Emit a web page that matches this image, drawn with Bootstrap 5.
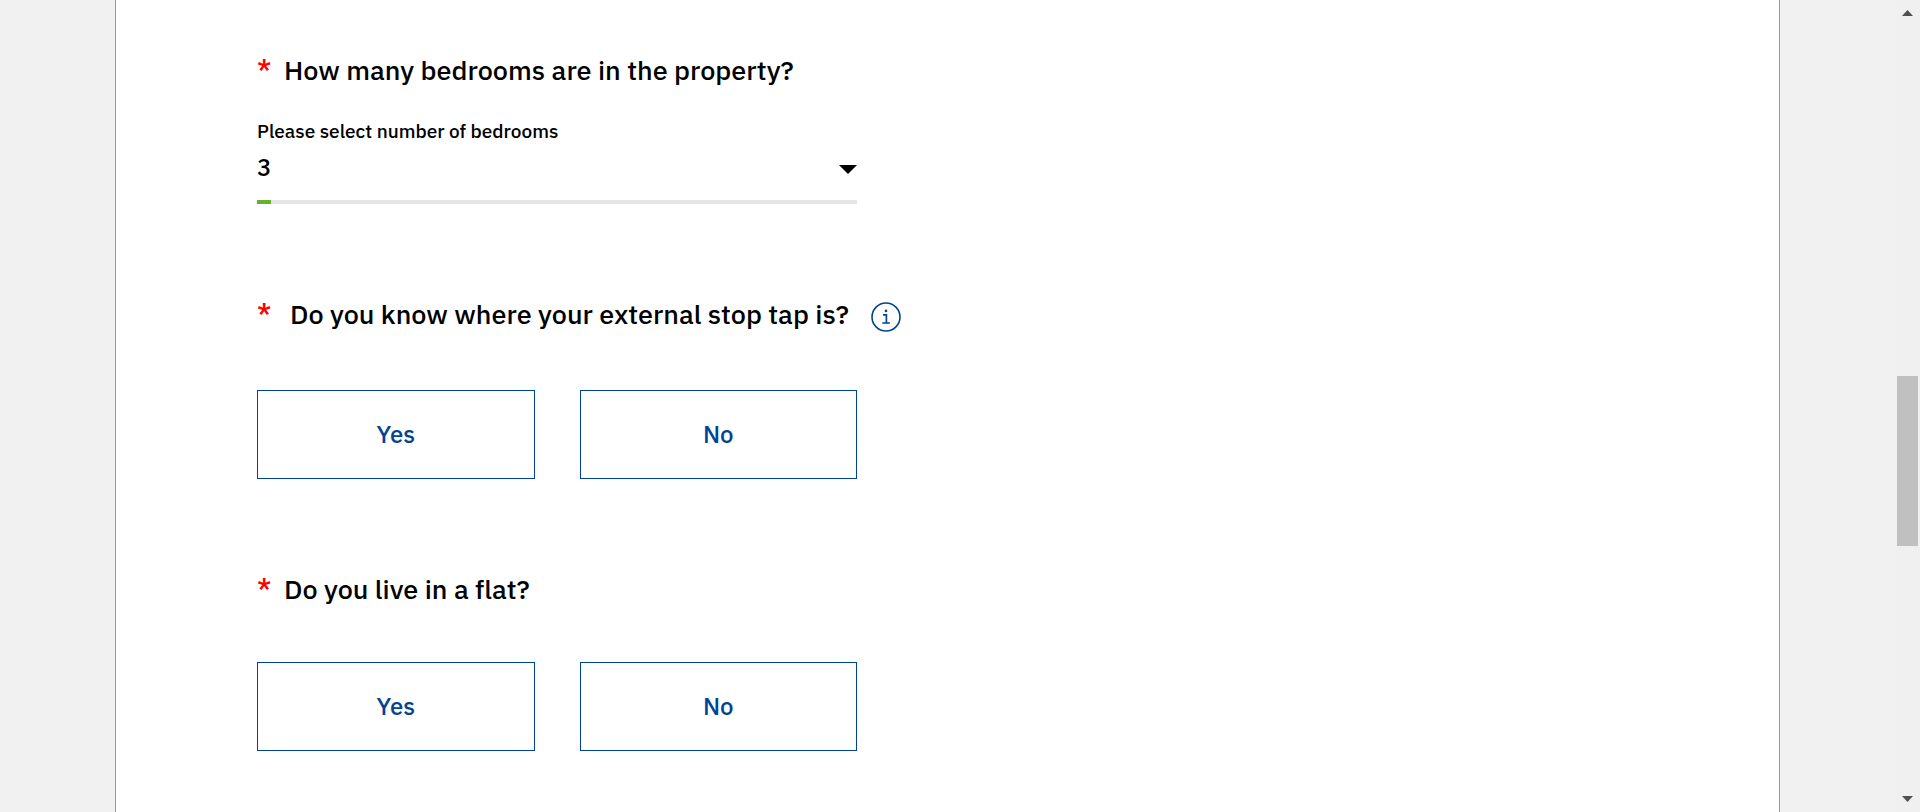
<!DOCTYPE html>
<html lang="en">
<head>
<meta charset="utf-8">
<meta name="viewport" content="width=device-width, initial-scale=1">
<title>About your property</title>
<link href="https://cdn.jsdelivr.net/npm/bootstrap@5.3.0/dist/css/bootstrap.min.css" rel="stylesheet">
<style>
  body { font-family: "IBM Plex Sans", Roboto, sans-serif; font-weight: 500; color: #000; background: #f1f1f1; }
  .sheet { background: #fff; border: solid #999; border-width: 0 1px; margin: 0 115px; padding: 50px 141px 50px; }
  .question { font-size: 27px; line-height: 40px; font-weight: 500; margin: 0; gap: 12px; }
  .question.with-help { gap: 18px; }
  .required { color: #f00; width: 15px; font-size: 28px; }
  .answers { max-width: 600px; }
  .field-label { font-size: 19px; line-height: 24px; margin: 29px 0 0; display: block; }
  .bedroom-select { border: 0; border-radius: 0; font-size: 24px; line-height: 32px; font-weight: 500; color: #000; padding: 8px 24px 17px 0;
    background-image: url("data:image/svg+xml,%3Csvg xmlns='http://www.w3.org/2000/svg' viewBox='0 0 18 9'%3E%3Cpath d='M0 0h18L9 9z'/%3E%3C/svg%3E");
    background-size: 18px 9px; background-position: right 0 top 22px; }
  .meter-line { height: 4px; border-radius: 0; background: #e5e5e5; }
  .meter-line .progress-bar { background: #64b32f; width: 14px; }
  .btn-choice { --bs-btn-color: #004494; --bs-btn-border-color: #004494; --bs-btn-hover-color: #fff; --bs-btn-hover-bg: #004494;
    --bs-btn-border-radius: 0; --bs-btn-font-size: 24px; --bs-btn-font-weight: 500; --bs-btn-padding-y: 26px; --bs-btn-line-height: 35px; }
  .choices { gap: 45px; margin-top: 56px; }
  .block-tap, .block-flat { margin-top: 90px; }
  .block-flat .choices { margin-top: 53px; }
  .help-btn { width: 30px; height: 30px; margin: 8px 0 0 4px; }
  .scroll-rail { width: 25px; background: #f0f0f0; padding: 10px 2px; }
  .scroll-thumb { background: #c0c0c0; flex: 170 0 0; }
</style>
</head>
<body>
<div class="d-flex min-vh-100">
  <div class="flex-grow-1 d-flex">
    <main class="sheet flex-grow-1">
      <form>
        <section>
          <h2 class="question d-flex"><span class="required">*</span><span>How many bedrooms are in the property?</span></h2>
          <div class="answers">
            <label class="field-label" for="bedrooms">Please select number of bedrooms</label>
            <select class="form-select bedroom-select" id="bedrooms">
              <option>1</option><option>2</option><option selected>3</option><option>4</option><option>5</option>
            </select>
            <div class="progress meter-line"><div class="progress-bar"></div></div>
          </div>
        </section>
        <section class="block-tap">
          <h2 class="question with-help d-flex"><span class="required">*</span><span>Do you know where your external stop tap is?</span>
            <button type="button" class="help-btn btn p-0 border-0 d-flex" aria-label="More information">
              <svg width="30" height="30" viewBox="0 0 30 30" fill="none" stroke="#004494">
                <circle cx="15" cy="15" r="14" stroke-width="1.6"/>
                <path d="M12 12.800h3.400v8M11.300 21h7.600" stroke-width="1.7"/>
                <circle cx="15" cy="8.900" r="1.300" fill="#004494" stroke="none"/>
              </svg>
            </button>
          </h2>
          <div class="answers choices d-flex">
            <button type="button" class="btn btn-choice flex-fill w-50">Yes</button>
            <button type="button" class="btn btn-choice flex-fill w-50">No</button>
          </div>
        </section>
        <section class="block-flat">
          <h2 class="question d-flex"><span class="required">*</span><span>Do you live in a flat?</span></h2>
          <div class="answers choices d-flex">
            <button type="button" class="btn btn-choice flex-fill w-50">Yes</button>
            <button type="button" class="btn btn-choice flex-fill w-50">No</button>
          </div>
        </section>
      </form>
    </main>
  </div>
  <div class="scroll-rail d-flex flex-column" aria-hidden="true">
    <svg class="mx-auto d-block" width="11" height="6" viewBox="0 0 11 6"><path d="M0 6h11L5.500 0z" fill="#505050"/></svg>
    <div style="flex: 360 0 0"></div>
    <div class="scroll-thumb"></div>
    <div style="flex: 250 0 0"></div>
    <svg class="mx-auto d-block" width="11" height="6" viewBox="0 0 11 6"><path d="M0 0h11L5.500 6z" fill="#505050"/></svg>
  </div>
</div>
<script src="https://cdn.jsdelivr.net/npm/bootstrap@5.3.0/dist/js/bootstrap.bundle.min.js"></script>
</body>
</html>
